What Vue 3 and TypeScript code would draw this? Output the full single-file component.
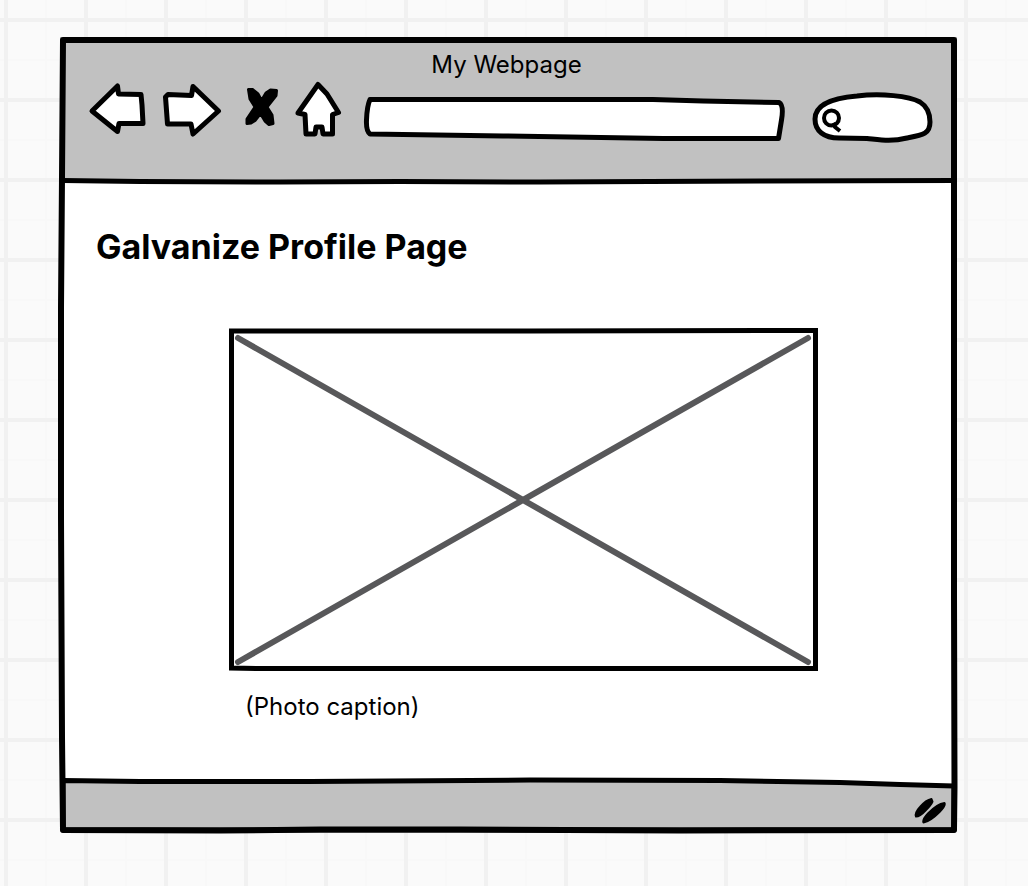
<script setup lang="ts">
import { ref } from 'vue'

interface NavButton {
  label: string
  kind: string
  width: number
  path: string
}

const address = ref('')
const query = ref('')

const navButtons: NavButton[] = [
  { label: 'Back', kind: 'hollow', width: 60, path: 'M4 31L29.500 6L30.500 14L53 14.500L54 25L55 43.500L31 43.500L29.500 51.500Z' },
  { label: 'Forward', kind: 'hollow', width: 60, path: 'M3.500 17L6 14.500L29.500 15.500L31 6.500L56.500 31L31 54L29 44L5.500 44Z' },
  { label: 'Stop', kind: 'solid', width: 45, path: 'M12.500 9.500L16.500 9.500L22 14L25.500 20.500L30 13L34.500 10L40.500 10.500L40 15.500L31 27L36 35L37 43.500L33 44.500L29 41L24.500 33.500L19 40.500L15 43L11 43.500L11 39L19 27L14 19Z' },
  { label: 'Home', kind: 'hollow', width: 48, path: 'M23 4.500L32 14L43.500 32.500L37.500 34.500L37.500 54L28 54L27 47L21 47L20 54L11 54L10 34.500L3 33Z' },
]
</script>

<template>
  <main class="page">
    <section class="browser">
      <header class="chrome">
        <div class="window-title">My Webpage</div>
        <nav class="toolbar" aria-label="Browser">
          <button v-for="b in navButtons" :key="b.label" type="button" :class="['nav', b.kind]" :aria-label="b.label">
            <svg :width="b.width" height="60" :viewBox="`0 0 ${b.width} 60`"><path :d="b.path" /></svg>
          </button>
          <label class="field address">
            <svg class="sketch" viewBox="0 0 422 64" preserveAspectRatio="none">
              <path class="fill-white" d="M7 19.500L290 19.500L340 21L416 22.500Q421 25 418.500 40L415.500 58.500L300 58.500L140 56L7 54Q3 51 3.500 40Q4 26 7 19.500Z" />
            </svg>
            <input v-model="address" type="text" aria-label="Address" />
          </label>
          <label class="field search">
            <svg class="sketch" viewBox="0 0 124 64" preserveAspectRatio="none">
              <path class="fill-white" d="M4 39C4 24 22 18 46 16C70 13 98 16 109 22C117 27 119 34 119 42C119 54 112 55 96 58C80 62 70 60 56 58.500L28 58C13 58 4 51 4 39Z" />
            </svg>
            <svg class="lens" width="32" height="60" viewBox="0 0 32 60">
              <circle cx="20.500" cy="38" r="7.500" />
              <path d="M22 43L24 47L29 51" />
            </svg>
            <input v-model="query" type="search" aria-label="Search" />
          </label>
        </nav>
        <svg class="sketch rule" viewBox="0 0 897 8" preserveAspectRatio="none">
          <path d="M3 3.500L80 4.500L220 5L340 4.500L480 5L700 4L895 3.500" />
        </svg>
      </header>

      <article class="content">
        <h1>Galvanize Profile Page</h1>
        <figure>
          <svg class="photo" viewBox="0 0 589 343" role="img" aria-label="Photo placeholder">
            <path class="cross" d="M9 10L579 334M579 10L9 334" />
            <path class="edge" d="M2.500 3L300 3L586.500 2.500L586.500 340.500L30 340.500L2.500 340Z" />
          </svg>
          <figcaption>(Photo caption)</figcaption>
        </figure>
      </article>

      <footer class="status">
        <svg class="sketch" viewBox="0 0 897 54" preserveAspectRatio="none">
          <path class="fill-gray" d="M3 1.500L80 2.500L250 2.500L470 1L660 1.500L780 3.500L840 5.500L894 7L894 51L3 51Z" />
        </svg>
        <svg class="grip" width="34" height="30" viewBox="0 0 34 30">
          <path d="M3 20.500Q1.500 17 7 11Q13 4 18.500 3L19.500 5.500Q18 9 13 14Q7 20.500 3 20.500Z" />
          <path d="M10.500 26.500Q9 24 15 17.500Q24 8 31.500 7Q33 9.500 26.500 16Q17 25.500 10.500 26.500Z" />
        </svg>
      </footer>

      <svg class="sketch frame" viewBox="0 0 897 796" preserveAspectRatio="none">
        <path d="M3 3L894 3L894 560L894.500 750L894 793L620 793.500L400 792.500L260 792.500L160 793.500L3 793L2 700L1 480L1 270L2 140Z" />
      </svg>
    </section>
  </main>
</template>

<style>
body {
  margin: 0;
}
</style>

<style scoped>
.page {
  box-sizing: border-box;
  min-height: 100vh;
  padding: 37px 71px 53px 60px;
  display: flex;
  font-family: Inter, "Liberation Sans", sans-serif;
  color: #000;
  background-color: #fafafa;
  background-image:
    linear-gradient(90deg, #f1f1f1 4px, transparent 4px),
    linear-gradient(#f1f1f1 4px, transparent 4px),
    linear-gradient(90deg, #f8f8f8 2px, transparent 2px),
    linear-gradient(#f8f8f8 2px, transparent 2px);
  background-size: 80px 80px;
  background-position: 4px 0, 0 18px, 45px 0, 0 59px;
}

.browser {
  position: relative;
  flex: 1;
  min-width: 0;
  display: flex;
  flex-direction: column;
  background: #fff;
}

.sketch {
  position: absolute;
  inset: 0;
  width: 100%;
  height: 100%;
  overflow: visible;
  pointer-events: none;
}

.sketch path {
  fill: none;
  stroke: #000;
  stroke-width: 5px;
  stroke-linejoin: round;
  vector-effect: non-scaling-stroke;
}

.sketch.frame path {
  stroke-width: 6px;
}

.sketch .fill-white {
  fill: #fff;
}

.sketch .fill-gray {
  fill: #c1c1c1;
}

.chrome {
  position: relative;
  padding: 13px 22px 0 28px;
  height: 131px;
  background: #c1c1c1;
}

.window-title {
  padding-right: 10px;
  font-size: 24px;
  line-height: 30px;
  text-align: center;
}

.toolbar {
  display: flex;
  gap: 14px;
}

.nav {
  flex: none;
  padding: 0;
  border: 0;
  height: 60px;
  background: none;
  cursor: pointer;
}

.nav svg {
  display: block;
}

.nav path {
  stroke: #000;
  stroke-linejoin: round;
}

.hollow path {
  fill: #fff;
  stroke-width: 5px;
}

.solid path {
  fill: #000;
  stroke-width: 3px;
}

.field {
  position: relative;
  display: flex;
  height: 64px;
}

.address {
  flex: 1;
  min-width: 60px;
  margin: 0 12px 0 6px;
}

.search {
  flex: none;
  width: 124px;
}

.field input {
  position: relative;
  flex: 1;
  min-width: 0;
  margin: 22px 10px 8px;
  padding: 0;
  border: 0;
  outline: 0;
  background: none;
  font: 20px Inter, "Liberation Sans", sans-serif;
}

.search input {
  margin-left: 0;
}

.lens {
  position: relative;
  flex: none;
  fill: none;
  stroke: #000;
  stroke-width: 4px;
}

.sketch.rule {
  top: auto;
  bottom: -4px;
  height: 8px;
}

.content {
  flex: 1;
  padding: 42px 139px 52px 36px;
}

h1 {
  margin: 0;
  font-size: 34px;
  line-height: 48px;
  font-weight: 700;
}

figure {
  margin: 57px 0 0 133px;
}

.photo {
  display: block;
  width: 100%;
  height: auto;
  fill: none;
}

.cross {
  stroke: #58585a;
  stroke-width: 6px;
  stroke-linecap: round;
}

.edge {
  stroke: #000;
  stroke-width: 5px;
}

figcaption {
  margin: 21px 0 0 16px;
  font-size: 24px;
  line-height: 30px;
}

.status {
  position: relative;
  display: flex;
  justify-content: flex-end;
  align-items: flex-end;
  height: 54px;
  padding-right: 10px;
}

.grip {
  position: relative;
  margin-bottom: 7px;
  stroke: #000;
  stroke-width: 2px;
  stroke-linejoin: round;
}
</style>
